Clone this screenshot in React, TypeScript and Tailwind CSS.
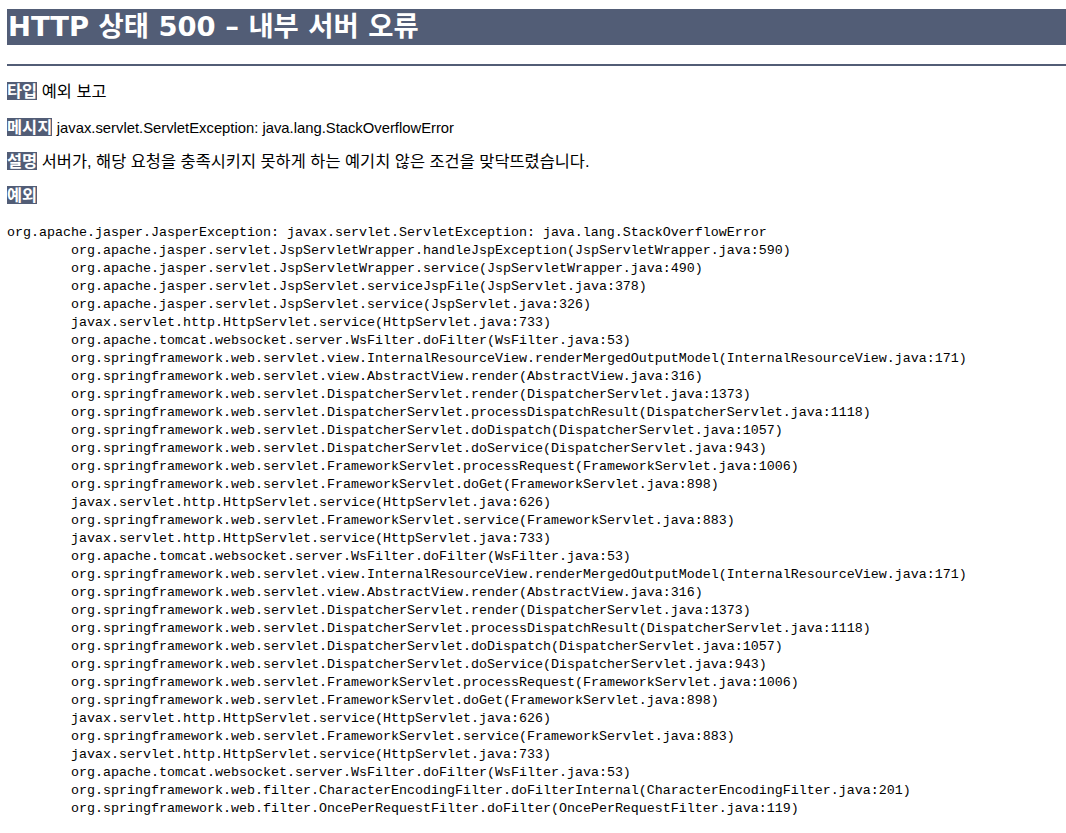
const trace = [
  'org.apache.jasper.servlet.JspServletWrapper.handleJspException(JspServletWrapper.java:590)',
  'org.apache.jasper.servlet.JspServletWrapper.service(JspServletWrapper.java:490)',
  'org.apache.jasper.servlet.JspServlet.serviceJspFile(JspServlet.java:378)',
  'org.apache.jasper.servlet.JspServlet.service(JspServlet.java:326)',
  'javax.servlet.http.HttpServlet.service(HttpServlet.java:733)',
  'org.apache.tomcat.websocket.server.WsFilter.doFilter(WsFilter.java:53)',
];

const springBlock = [
  'org.springframework.web.servlet.view.InternalResourceView.renderMergedOutputModel(InternalResourceView.java:171)',
  'org.springframework.web.servlet.view.AbstractView.render(AbstractView.java:316)',
  'org.springframework.web.servlet.DispatcherServlet.render(DispatcherServlet.java:1373)',
  'org.springframework.web.servlet.DispatcherServlet.processDispatchResult(DispatcherServlet.java:1118)',
  'org.springframework.web.servlet.DispatcherServlet.doDispatch(DispatcherServlet.java:1057)',
  'org.springframework.web.servlet.DispatcherServlet.doService(DispatcherServlet.java:943)',
  'org.springframework.web.servlet.FrameworkServlet.processRequest(FrameworkServlet.java:1006)',
  'org.springframework.web.servlet.FrameworkServlet.doGet(FrameworkServlet.java:898)',
  'javax.servlet.http.HttpServlet.service(HttpServlet.java:626)',
  'org.springframework.web.servlet.FrameworkServlet.service(FrameworkServlet.java:883)',
  'javax.servlet.http.HttpServlet.service(HttpServlet.java:733)',
  'org.apache.tomcat.websocket.server.WsFilter.doFilter(WsFilter.java:53)',
];

const tail = [
  'org.springframework.web.filter.CharacterEncodingFilter.doFilterInternal(CharacterEncodingFilter.java:201)',
  'org.springframework.web.filter.OncePerRequestFilter.doFilter(OncePerRequestFilter.java:119)',
];

const frames = [...trace, ...springBlock, ...springBlock, ...tail];

const sans = "font-['Liberation_Sans','Noto_Sans_CJK_KR',sans-serif]";

function Row({ label, children, className }: { label: string; children?: React.ReactNode; className: string }) {
  return (
    <p className={`${sans} h-[18px] text-[16.4px] leading-[18px] text-black ${className}`}>
      <b className="bg-[#525D76] font-bold text-white">{label}</b>
      {children ? <span> {children}</span> : null}
    </p>
  );
}

export default function App() {
  return (
    <div className="min-h-screen bg-white pl-[7px]">
      <h1 className="mt-[9px] h-[36px] bg-[#525D76] pl-px text-[27.4px] font-bold leading-[36px] text-white font-['DejaVu_Sans','Noto_Sans_CJK_KR',sans-serif]">
        HTTP 상태 500 – 내부 서버 오류
      </h1>
      <hr className="mt-[19px] h-[2px] border-none bg-[#525D76]" />
      <Row label="타입" className="mt-[16px]">예외 보고</Row>
      <Row label="메시지" className="mt-[18px]">
        <span className="text-[14.8px]">javax.servlet.ServletException: java.lang.StackOverflowError</span>
      </Row>
      <Row label="설명" className="mt-[16px]">서버가, 해당 요청을 충족시키지 못하게 하는 예기치 않은 조건을 맞닥뜨렸습니다.</Row>
      <Row label="예외" className="mt-[16px]" />
      <pre className="mt-[20px] text-[13.33px] leading-[18px] text-black [tab-size:8] font-['Liberation_Mono','Noto_Sans_CJK_KR',monospace]">
        {'org.apache.jasper.JasperException: javax.servlet.ServletException: java.lang.StackOverflowError'}
        {frames.map(f => '\n\t' + f).join('')}
      </pre>
    </div>
  );
}
